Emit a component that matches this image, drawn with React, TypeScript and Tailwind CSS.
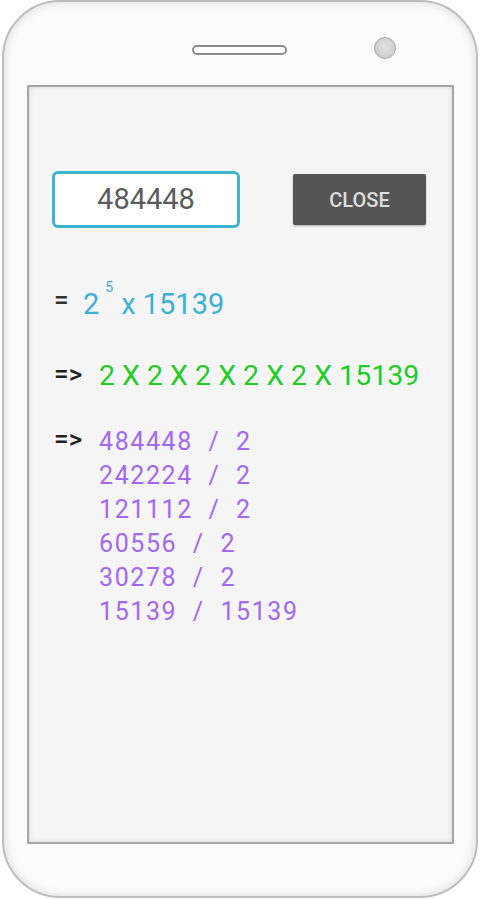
import React from "react";

const steps = [
  ["484448", "2"],
  ["242224", "2"],
  ["121112", "2"],
  ["60556", "2"],
  ["30278", "2"],
  ["15139", "15139"],
];

export default function App() {
  return (
    <div className="w-[480px] h-[900px] bg-white flex justify-center font-['Roboto',sans-serif]">
      {/* ── Phone body ── */}
      <div className="w-[476px] h-[898px] rounded-[58px] border-2 border-[#bdbdbd] bg-[#fbfbfb] shadow-[inset_0_0_10px_rgba(0,0,0,0.14)] flex flex-col">
        {/* speaker + camera */}
        <div className="h-[83px] flex items-start pl-[188px] pt-[43px]">
          <div className="w-[95px] h-[10px] rounded-full border-2 border-[#8a8a8a] bg-white" />
          <div className="ml-[87px] -mt-[8px] w-[22px] h-[22px] rounded-full border border-[#a8a8a8] bg-[radial-gradient(circle_at_50%_45%,#e4e4e4,#c4c4c4)]" />
        </div>

        {/* ── Screen ── */}
        <div className="ml-[23px] w-[427px] h-[759px] border-2 border-[#a6a6a6] bg-[#f5f5f5] shadow-[inset_0_0_4px_rgba(0,0,0,0.15)] flex flex-col">
          <div className="mt-[84px] flex items-center pl-[23px]">
            <div className="w-[188px] h-[57px] rounded-[6px] border-[3px] border-[#3db4d0] bg-white flex items-center justify-center">
              <span className="text-[29px] text-[#5c5c5c]">484448</span>
            </div>
            <button className="ml-[53px] w-[133px] h-[51px] rounded-[2px] bg-[#555555] text-[20px] font-medium text-[#dedede] shadow-[0_1px_2px_rgba(0,0,0,0.3)]">
              CLOSE
            </button>
          </div>

          {/* = 2^5 x 15139 */}
          <div className="mt-[56px] h-[40px] pl-[25px] flex items-center">
            <span className="w-[29px] text-[26px] font-medium text-[#333] -mt-[8px] leading-none">=</span>
            <span className="text-[29px] text-[#3fb0d2] leading-none">2</span>
            <span className="ml-[6px] -mt-[34px] text-[14px] text-[#3fb0d2] leading-none">5</span>
            <span className="ml-[8px] text-[29px] text-[#3fb0d2] leading-none">x 15139</span>
          </div>

          {/* => factors */}
          <div className="mt-[32px] h-[40px] pl-[25px] flex items-center">
            <span className="w-[45px] text-[26px] font-medium text-[#222] -mt-[4px] leading-none">=&gt;</span>
            <span className="text-[28.5px] text-[#22cc22] whitespace-pre leading-none">2 X 2 X 2 X 2 X 2 X 15139</span>
          </div>

          {/* => division steps */}
          <div className="mt-[29px] pl-[25px] flex items-start">
            <span className="w-[45px] h-[34px] flex items-center text-[26px] font-medium text-[#222] -mt-[3px] leading-none">=&gt;</span>
            <div className="flex flex-col">
              {steps.map(([n, d], i) => (
                <span
                  key={i}
                  className="h-[34px] leading-[34px] text-[25px] tracking-[1.6px] text-[#a368f2] whitespace-pre"
                >
                  {n}  /  {d}
                </span>
              ))}
            </div>
          </div>
        </div>
      </div>
    </div>
  );
}
